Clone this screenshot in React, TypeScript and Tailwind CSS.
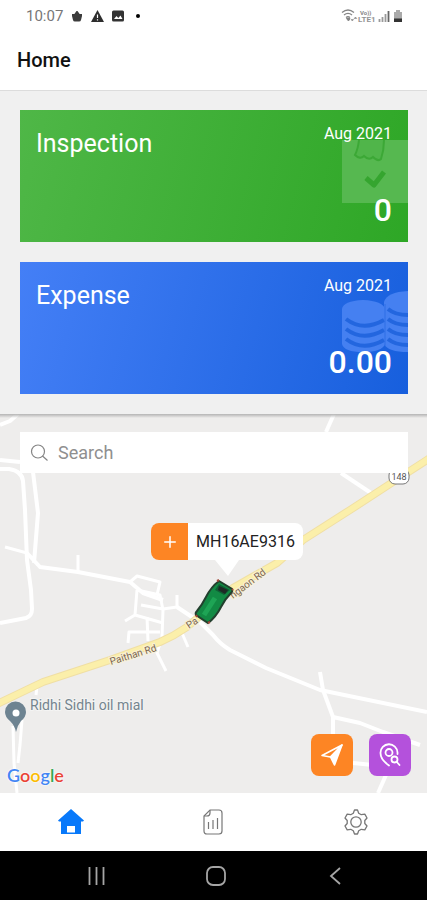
import React from 'react';
import { Plus } from 'lucide-react';

interface SummaryCardProps {
    title: string;
    period: string;
    value: string;
    className: string;
    children: React.ReactNode;
}

function SummaryCard({ title, period, value, className, children }: SummaryCardProps) {
    return (
        <section className={`relative flex h-[132px] justify-between overflow-hidden px-4 text-white ${className}`}>
            {children}
            <h2 className="relative pt-[18px] text-[25px] leading-8">{title}</h2>
            <div className="relative flex flex-col items-end justify-between pt-3 pb-3">
                <span className="text-base leading-6">{period}</span>
                <strong className="text-[32px] leading-10 font-medium">{value}</strong>
            </div>
        </section>
    );
}

function StatusBar() {
    return (
        <div className="flex h-8 items-center justify-between pr-6 pl-[26px] text-[#777]">
            <div className="flex items-center gap-2">
                <span className="text-[15px] leading-5">10:07</span>
                <svg width="12" height="12" viewBox="0 0 12 12" fill="#3c3c3c">
                    <path d="M1 4h10v2l-1 4q-.3 1.500-2 1.500H4Q2.300 11.500 2 10L1 6z" />
                    <path d="M3 4.500 5.500 1h1L9 4.500" />
                </svg>
                <svg width="13" height="12" viewBox="0 0 13 12">
                    <path d="M6.500 0 13 12H0z" fill="#2d2d2d" />
                    <path d="M6.500 4.500v3.500M6.500 9.200v1.300" stroke="#fff" strokeWidth="1.200" />
                </svg>
                <svg width="12" height="12" viewBox="0 0 12 12">
                    <rect y=".5" width="12" height="11" rx="1.500" fill="#333" />
                    <path d="m2 9 2.500-3 1.800 2L8.500 5.500 10.500 9z" fill="#fff" />
                </svg>
                <span className="ml-1 size-1 rounded-full bg-black" />
            </div>
            <svg width="62" height="14" viewBox="0 0 62 14" fill="none" stroke="#858585">
                <path d="M1 3.500Q7-1.500 13 3.500M3 6q4-3.200 8 0M5 8.500q2-1.500 4 0" strokeWidth="1.300" />
                <path d="m5.500 9.500 2 2.500 1.500-2.500z" fill="#858585" />
                <path d="m10 10.500 1.300 1.500 1.300-1.500zM13 9.500 14.500 8l1.300 1.500z" fill="#858585" strokeWidth=".5" />
                <text x="19" y="6" fontSize="6" fontWeight="700" stroke="none" fill="#858585" className="font-['Roboto',sans-serif]">Vo))</text>
                <text x="17" y="13" fontSize="8" fontWeight="700" stroke="none" fill="#949494" className="font-['Roboto',sans-serif]">LTE1</text>
                <path d="M38.500 13v-3M41.500 13V8M44.500 13V5" strokeWidth="1.800" stroke="#9a9a9a" />
                <path d="M47.500 13V2" strokeWidth="1.800" stroke="#666" />
                <path d="M53 3h2V1h4v2h2v10h-8z" fill="#aaa" stroke="none" />
                <path d="M53 9.500h8V13h-8z" fill="#333" stroke="none" />
            </svg>
        </div>
    );
}

function Roads() {
    return (
        <svg
            className="absolute inset-0 size-full font-['Roboto',sans-serif]"
            viewBox="0 0 427 379"
            preserveAspectRatio="xMidYMin slice"
            fill="none"
        >
            <g stroke="#fff" strokeWidth="4" strokeLinejoin="round">
                <path d="M0 11 10 7 18 0M0 46l20 2M0 55l9 0q13 2 14 12l2 29 2 50 4 30 1 19q0 7-6 9L0 209" />
                <path d="m33 58 5 41-4 50M27 139l13 14 38 5 52 10 13 11 20 7" />
                <path d="M177 193l24 16 12 12q7 9 17 15l36 18 54 22 107 22" />
                <path d="m320 258 3 18 10 27v17M333 303l27 6 23 9 37 13M353 349l20 2M386 361l-8 18" />
                <path d="m334 0-8 18M341 59l30 20" />
            </g>
            <g stroke="#fff" strokeWidth="3" strokeLinejoin="round">
                <path d="m5 133 22 6M78 141v17M130 168l7-6 23 6-3 13M137 176l23 5 3 15-1 27-5 16 9 18" />
                <path d="m137 176-2 25-10 6M141 191l22 4M135 201l28 8M128 229l1-11h31M147 203l1 24" />
                <path d="M177 181v12l-14 2M182 219l6 14M37 272l-1 9" />
                <path d="m13 312 1 37 3 30M22 306l-2 25-2 18" />
            </g>
            <path
                d="m430 44-37 24-43 28-47 30-26 23-44 25-46 39q-13 9-27 15l-50 18-67 22-46 22"
                stroke="#f0dfa4"
                strokeWidth="8"
                strokeLinejoin="round"
            />
            <path
                d="m430 44-37 24-43 28-47 30-26 23-44 25-46 39q-13 9-27 15l-50 18-67 22-46 22"
                stroke="#fbefaa"
                strokeWidth="6"
                strokeLinejoin="round"
            />

            {/* Road labels */}
            <g fill="#7c6650" stroke="#f8f1d5" strokeWidth="2" paintOrder="stroke" fontSize="10">
                <text transform="translate(111 251) rotate(-17)">Paithan Rd</text>
                <text transform="translate(189 215) rotate(-34)">Pa</text>
                <text transform="translate(233 185) rotate(-37)">ngaon Rd</text>
            </g>
            <rect x="389" y="55" width="20" height="15" rx="6" fill="#fff" stroke="#777" />
            <text x="399" y="66" textAnchor="middle" fontSize="9" fill="#555">148</text>

            {/* Place */}
            <path d="M16 318q-1-6-6-11-5-4-5-9a10 10 0 0 1 21 0q0 5-5 9-4 5-5 11" fill="#6d8391" />
            <circle cx="16" cy="299" r="3.500" fill="#fff" />
            <text x="30" y="296" fontSize="14" fill="#74858f" stroke="#f4f4f3" strokeWidth="2" paintOrder="stroke">
                Ridhi Sidhi oil mial
            </text>

            {/* Vehicle */}
            <path
                d="m219 167 13 8q1 2-1 4-6 6-10 14-5 10-13 16l-12-8q-1-2 1-4 5-6 9-14 5-10 13-16z"
                fill="#128a44"
                stroke="#22402e"
                strokeWidth="2"
            />
            <path d="m219 170 11 6-6 5-9-5z" fill="#0f5f35" />
            <path d="m219 172 9 4-3 4-7-4z" fill="#1e2a26" />
            <path d="m215 184-11 17" stroke="#1ea455" strokeWidth="5" />
            <path d="m217 167 2-1m13 9 1 1m-37 25 1 2m11 6 2-1" stroke="#a4493a" strokeWidth="2" />
        </svg>
    );
}

function VehicleMap() {
    return (
        <main className="relative min-h-[379px] flex-1 overflow-hidden bg-[#eeedec]">
            <Roads />
            <div className="absolute inset-x-0 top-0 h-1 bg-gradient-to-b from-[#b4b4b4] to-transparent" />
            <label className="absolute inset-x-5 top-[18px] mr-[-1px] flex h-[41px] items-center gap-2 bg-white pl-[10px]">
                <svg width="20" height="20" viewBox="0 0 20 20" fill="none" stroke="#858585" strokeWidth="1.200">
                    <circle cx="8" cy="8.500" r="6.500" />
                    <path d="m12.500 13 5 4.500" />
                </svg>
                <input
                    type="search"
                    placeholder="Search"
                    aria-label="Search"
                    className="min-w-0 flex-1 bg-transparent text-lg leading-6 outline-none placeholder:text-[#8f8f8f]"
                />
            </label>

            {/* Vehicle callout */}
            <div className="absolute top-[109px] left-[151px]">
                <div className="flex h-[37px] overflow-hidden rounded-lg bg-white">
                    <button type="button" aria-label="Add" className="flex w-[37px] items-center justify-center bg-[#fd8524]">
                        <Plus size={18} className="text-white" />
                    </button>
                    <span className="px-2 text-base leading-[37px] text-[#222]">MH16AE9316</span>
                </div>
                <svg className="mx-auto" width="24" height="16" viewBox="0 0 24 16">
                    <path d="M0 0h24L13 16z" fill="#fff" />
                </svg>
            </div>

            <a
                href="#google"
                className="absolute bottom-[6px] left-[7px] font-['Lato',sans-serif] text-lg leading-6 font-semibold text-[#4285f4] [text-shadow:0_0_2px_#fff,0_0_2px_#fff]"
            >
                <span>G</span>
                <span className="text-[#ea4335]">o</span>
                <span className="text-[#fbbc05]">o</span>
                <span>g</span>
                <span className="text-[#34a853]">l</span>
                <span className="text-[#ea4335]">e</span>
            </a>

            <div className="absolute right-4 bottom-[17px] flex gap-4">
                <button type="button" aria-label="Navigate" className="flex size-[42px] items-center justify-center rounded-lg bg-[#fd8524]">
                    <svg width="24" height="24" viewBox="0 0 24 24" fill="none" stroke="#fff" strokeWidth="1.600" strokeLinejoin="round">
                        <path d="M22 2 2 12.500l8.500 1.500z" />
                        <path d="M22 2 10.500 14l4 8z" fill="#fff" />
                    </svg>
                </button>
                <button type="button" aria-label="Find place" className="flex size-[42px] items-center justify-center rounded-lg bg-[#b451dc]">
                    <svg width="24" height="24" viewBox="0 0 24 24" fill="none" stroke="#fff" strokeWidth="1.800" strokeLinecap="round">
                        <path d="M11 22.500C6 19 2.500 15 2.500 10a8.500 8.500 0 0 1 17-.500v1.500" />
                        <circle cx="11" cy="9.500" r="3.500" />
                        <circle cx="16.500" cy="16.500" r="3" />
                        <path d="m18.800 19 2.700 3" />
                    </svg>
                </button>
            </div>
        </main>
    );
}

export default function App() {
    return (
        <div className="flex min-h-screen flex-col bg-white font-['Roboto',sans-serif]">
            <StatusBar />
            <header className="px-[17px] pt-4 pb-[18px]">
                <h1 className="text-xl leading-6 font-medium text-[#111]">Home</h1>
            </header>

            <div className="flex flex-col gap-5 border-t border-[#dcdcdc] bg-[#f0f0f0] pt-[19px] pr-[19px] pb-5 pl-5">
                <SummaryCard
                    title="Inspection"
                    period="Aug 2021"
                    value="0"
                    className="bg-linear-[105deg] from-[#4fb747] to-[#2ea726]"
                >
                    <svg className="absolute top-[26px] right-0" width="66" height="67" viewBox="0 0 66 67">
                        <path d="M0 4h66v63H0z" fill="#56b850" />
                        <path
                            d="M17 4q-1 9-4 15 5 5 9 1 5 5 9 1 5 5 8 2 3-9 3-19"
                            fill="#50b54a"
                            stroke="#3ca836"
                            strokeWidth="2"
                        />
                        <path d="m24 42 8 7 10-13" fill="none" stroke="#35a52f" strokeWidth="5" strokeLinejoin="round" />
                    </svg>
                </SummaryCard>
                <SummaryCard
                    title="Expense"
                    period="Aug 2021"
                    value="0.00"
                    className="bg-linear-[105deg] from-[#447ff6] to-[#175fdd]"
                >
                    <svg className="absolute top-[28px] right-0" width="66" height="64" viewBox="0 0 66 64" fill="none">
                        <path d="M0 19Q1 11 21 10q20 1 22 9v35q-3 8-22 8Q2 62 0 54z" fill="#4580f1" />
                        <path d="M42 12Q45 2 66 1v61q-20 0-24-8z" fill="#4580f1" />
                        <g stroke="#2366df" strokeWidth="4">
                            <path d="M4 29q17 13 38 1M4 39q17 13 38 1M4 49q17 13 38 1" />
                            <path d="M46 19q7 6 20 6M46 29q7 6 20 6M46 39q7 6 20 6M46 49q7 6 20 6" />
                        </g>
                        <path d="M43 14v42" stroke="#2e6fe6" />
                    </svg>
                </SummaryCard>
            </div>

            <VehicleMap />

            <nav className="grid h-[58px] grid-cols-3 items-center justify-items-center bg-white">
                <a href="#home" aria-label="Home">
                    <svg width="26" height="26" viewBox="0 0 26 26" fill="#0879fa">
                        <path d="M13 0 26 11.500l-1 1h-2V25h-6v-8H9v8H3V12.500H1l-1-1z" />
                        <path d="M9 23.500h8V25H9z" />
                    </svg>
                </a>
                <a href="#reports" aria-label="Reports">
                    <svg width="20" height="26" viewBox="0 0 20 26" fill="none" stroke="#777" strokeWidth="1.200">
                        <path d="M7 1h9q3 0 3 3v18q0 3-3 3H4q-3 0-3-3V7z" />
                        <path d="M7 1v3q0 3-3 3H1M5.500 13v7M10 11v9M14.500 9v11" />
                    </svg>
                </a>
                <a href="#settings" aria-label="Settings">
                    <svg width="24" height="26" viewBox="0 0 24 26" fill="none" stroke="#777" strokeWidth="1.300" strokeLinejoin="round">
                        <path d="M10.500 1h3l1.200 3.200 2.600 1.500L20.800 5.200 23 9l-2.200 2.500v3L23 17l-2.200 3.800-3.500-.500-2.600 1.500L13.500 25h-3l-1.200-3.200-2.600-1.500-3.500.500L1 17l2.200-2.500v-3L1 9l2.200-3.800 3.500.500 2.600-1.500z" />
                        <circle cx="12" cy="13" r="5.200" />
                    </svg>
                </a>
            </nav>

            <div className="flex h-[49px] items-center justify-between bg-black pr-[82px] pl-[86px]">
                <button type="button" aria-label="Recent apps">
                    <svg width="20" height="18" viewBox="0 0 20 18" stroke="#a5a5a5" strokeWidth="1.800">
                        <path d="M3.500 0v18M10.500 0v18M17.500 0v18" />
                    </svg>
                </button>
                <button type="button" aria-label="Home screen">
                    <svg width="20" height="20" viewBox="0 0 20 20" fill="none" stroke="#a5a5a5" strokeWidth="1.800">
                        <rect x="1" y="1" width="18" height="18" rx="6" />
                    </svg>
                </button>
                <button type="button" aria-label="Back">
                    <svg width="20" height="18" viewBox="0 0 20 18" fill="none" stroke="#a5a5a5" strokeWidth="1.800">
                        <path d="m15 1-9 8 9 8" />
                    </svg>
                </button>
            </div>
        </div>
    );
}
